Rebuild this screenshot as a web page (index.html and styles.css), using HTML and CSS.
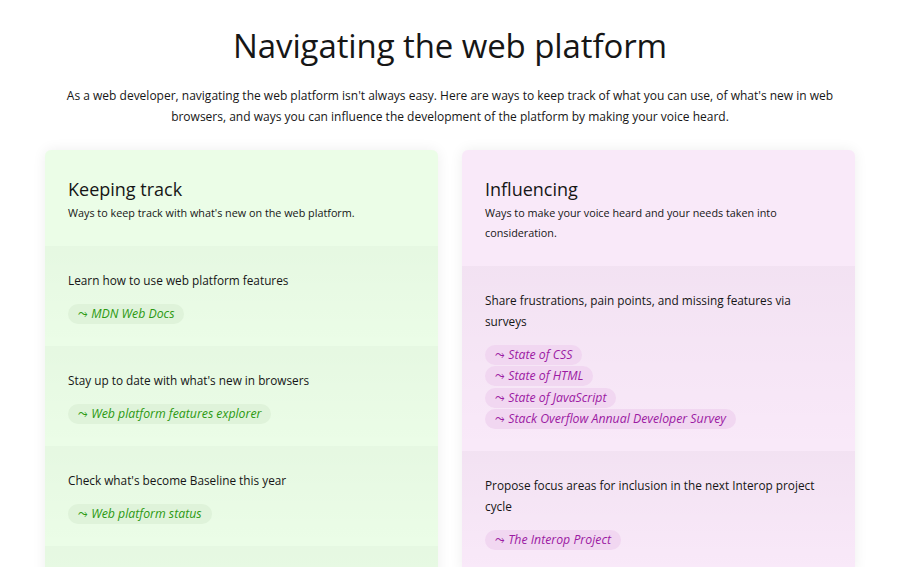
FILE: index.html
```html
<!DOCTYPE html>
<html lang="en">
<head>
<meta charset="utf-8">
<title>Navigating the web platform</title>
<link rel="stylesheet" href="styles.css">
</head>
<body>
<main class="page">
  <h1 class="title">Navigating the web platform</h1>
  <p class="intro">As a web developer, navigating the web platform isn't always easy. Here are ways to keep track of what you can use, of what's new in web browsers, and ways you can influence the development of the platform by making your voice heard.</p>
  <div class="columns">
    <section class="card card-green">
      <header class="card-head">
        <h2 class="card-title">Keeping track</h2>
        <p class="card-sub">Ways to keep track with what's new on the web platform.</p>
      </header>
      <div class="item">
        <p class="item-text">Learn how to use web platform features</p>
        <ul class="links"><li><a class="pill" href="#"><span class="arrow">⤳</span> MDN Web Docs</a></li></ul>
      </div>
      <div class="item">
        <p class="item-text">Stay up to date with what's new in browsers</p>
        <ul class="links"><li><a class="pill" href="#"><span class="arrow">⤳</span> Web platform features explorer</a></li></ul>
      </div>
      <div class="item">
        <p class="item-text">Check what's become Baseline this year</p>
        <ul class="links"><li><a class="pill" href="#"><span class="arrow">⤳</span> Web platform status</a></li></ul>
      </div>
      <div class="item">
        <p class="item-text">Find out which features are available everywhere</p>
        <ul class="links"><li><a class="pill" href="#"><span class="arrow">⤳</span> Baseline</a></li></ul>
      </div>
    </section>
    <section class="card card-purple">
      <header class="card-head">
        <h2 class="card-title">Influencing</h2>
        <p class="card-sub">Ways to make your voice heard and your needs taken into consideration.</p>
      </header>
      <div class="item">
        <p class="item-text">Share frustrations, pain points, and missing features via surveys</p>
        <ul class="links">
          <li><a class="pill" href="#"><span class="arrow">⤳</span> State of CSS</a></li>
          <li><a class="pill" href="#"><span class="arrow">⤳</span> State of HTML</a></li>
          <li><a class="pill" href="#"><span class="arrow">⤳</span> State of JavaScript</a></li>
          <li><a class="pill" href="#"><span class="arrow">⤳</span> Stack Overflow Annual Developer Survey</a></li>
        </ul>
      </div>
      <div class="item">
        <p class="item-text">Propose focus areas for inclusion in the next Interop project cycle</p>
        <ul class="links"><li><a class="pill" href="#"><span class="arrow">⤳</span> The Interop Project</a></li></ul>
      </div>
    </section>
  </div>
</main>
</body>
</html>
```
FILE: styles.css
```css
* { box-sizing: border-box; }
html, body { margin: 0; padding: 0; background: #fff; }
body {
  font-family: "Open Sans", "Noto Sans", sans-serif;
  color: #161616;
  font-size: 12px;
}
.page {
  max-width: 810px;
  margin: 0 auto;
  padding-top: 24px;
}
.title {
  margin: 0;
  text-align: center;
  font-weight: 400;
  font-size: 33px;
  line-height: 44px;
  letter-spacing: -0.1px;
}
.intro {
  margin: 17px auto 0;
  max-width: 790px;
  text-align: center;
  line-height: 21px;
  font-size: 12px;
}
.columns {
  display: grid;
  grid-template-columns: 1fr 1fr;
  gap: 24px;
  margin-top: 23px;
  align-items: start;
}
.card {
  border-radius: 6px 6px 0 0;
  box-shadow: 0 0 14px rgba(0, 0, 0, 0.07);
  overflow: hidden;
}
.card-green { background: #ebfde7; }
.card-purple { background: #f9e9f9; }
.card-head {
  padding: 25px 23px 23px;
}
.card-title {
  margin: 0;
  font-weight: 400;
  font-size: 18px;
  line-height: 28px;
}
.card-sub {
  margin: 0;
  font-size: 10.8px;
  line-height: 20px;
}
.item {
  padding: 24px 23px 22px;
  background: linear-gradient(to bottom, rgba(0, 40, 0, 0.025), rgba(0, 40, 0, 0) 100%);
}
.card-purple .item {
  background: linear-gradient(to bottom, rgba(40, 0, 40, 0.03), rgba(40, 0, 40, 0) 100%);
}
.item-text {
  margin: 0 0 13px;
  font-size: 11.8px;
  line-height: 21px;
}
.links {
  list-style: none;
  margin: 0;
  padding: 0;
  display: flex;
  flex-direction: column;
  align-items: flex-start;
  gap: 1.4px;
}
.pill {
  display: inline-block;
  padding: 0 10px;
  height: 20px;
  line-height: 20px;
  border-radius: 10px;
  font-style: italic;
  font-size: 12.3px;
  text-decoration: none;
}
.arrow {
  font-family: "DejaVu Sans", sans-serif;
  font-style: normal;
  font-size: 12px;
}
.card-green .pill { background: #dff3da; color: #2c9a12; }
.card-purple .pill { background: #f1d7f1; color: #9c1aa3; }
```
